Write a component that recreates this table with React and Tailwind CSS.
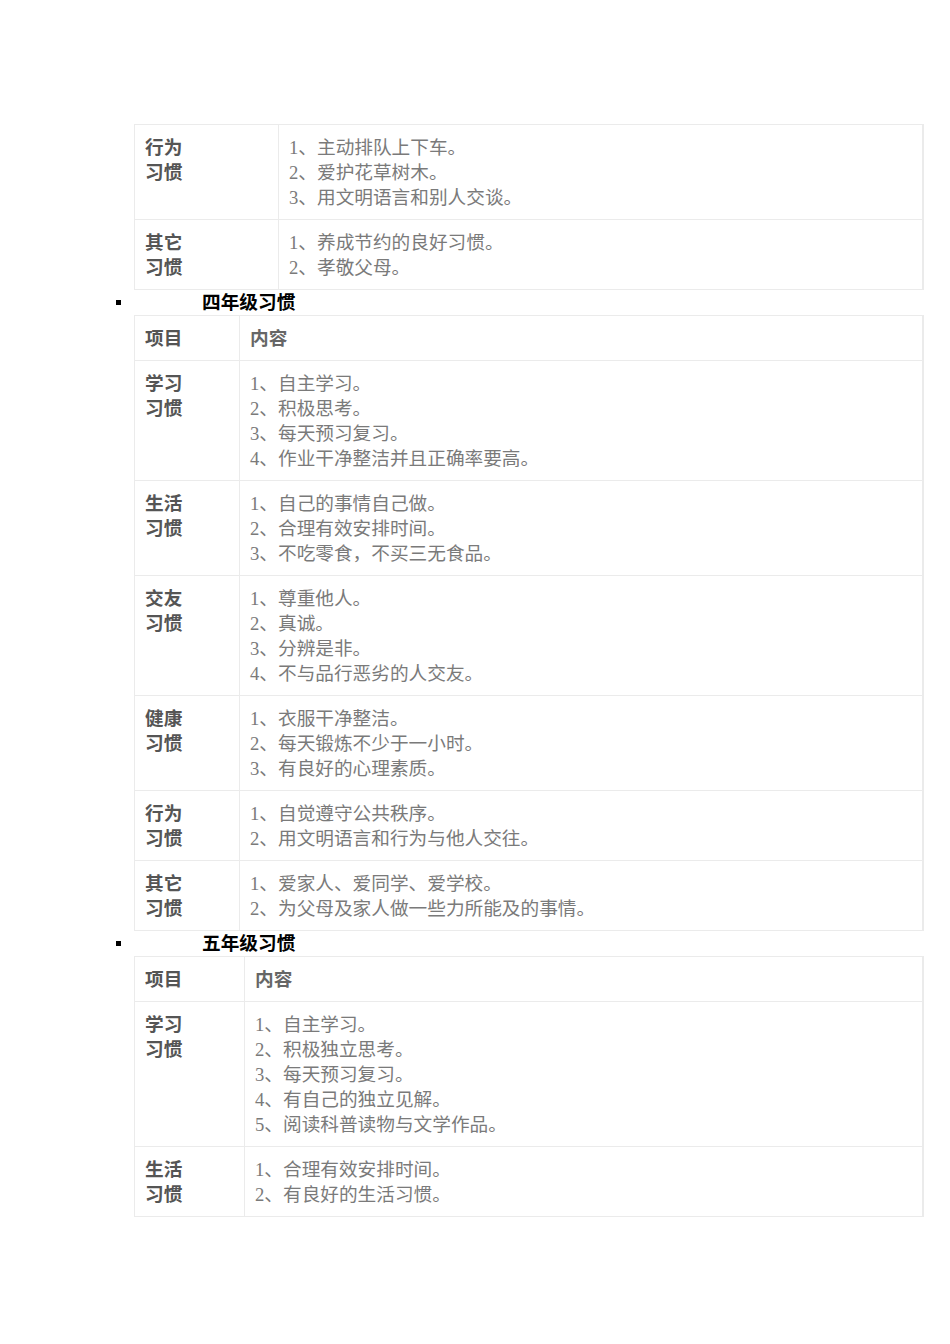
import React from "react";

const labelFont = { fontFamily: '"Liberation Sans","Noto Sans CJK SC",sans-serif' };
const bodyFont = { fontFamily: '"Liberation Serif","Noto Sans CJK SC",serif' };

function Table({ leftW, header, rows }) {
  return (
    <div className="ml-[134px] w-[790px] border border-[#ebebeb] border-r-2">
      {header && (
        <div className="flex">
          <div
            className={`${leftW} shrink-0 border-r border-[#ebebeb] px-[10px] pt-[10px] pb-[9px] text-[18.67px] leading-[25px] font-semibold text-[#555]`}
            style={labelFont}
          >
            项目
          </div>
          <div
            className="flex-1 px-[10px] pt-[10px] pb-[9px] text-[18.67px] leading-[25px] font-semibold text-[#666]"
            style={labelFont}
          >
            内容
          </div>
        </div>
      )}
      {rows.map((r, i) => (
        <div
          key={i}
          className={`flex ${header || i > 0 ? "border-t border-[#ebebeb]" : ""}`}
        >
          <div
            className={`${leftW} shrink-0 border-r border-[#ebebeb] px-[10px] pt-[10px] pb-[9px] text-[18.67px] leading-[25px] font-semibold text-[#555]`}
            style={labelFont}
          >
            <div>{r.label[0]}</div>
            <div>{r.label[1]}</div>
          </div>
          <div
            className="flex-1 px-[10px] pt-[10px] pb-[9px] text-[18.67px] leading-[25px] text-[#7a7a7a]"
            style={bodyFont}
          >
            {r.items.map((t, j) => (
              <div key={j}>
                {j + 1}、{t}
              </div>
            ))}
          </div>
        </div>
      ))}
    </div>
  );
}

function Heading({ text }) {
  return (
    <div className="flex h-[25px] items-center">
      <div className="ml-[116px] h-[5px] w-[5px] bg-black" />
      <div
        className="ml-[81px] text-[18.67px] font-bold leading-[25px] text-black"
        style={labelFont}
      >
        {text}
      </div>
    </div>
  );
}

export default function App() {
  return (
    <div className="h-[1344px] w-[950px] bg-white pt-[124px]">
      <Table
        leftW="w-[144px]"
        rows={[
          { label: ["行为", "习惯"], items: ["主动排队上下车。", "爱护花草树木。", "用文明语言和别人交谈。"] },
          { label: ["其它", "习惯"], items: ["养成节约的良好习惯。", "孝敬父母。"] },
        ]}
      />
      <Heading text="四年级习惯" />
      <Table
        leftW="w-[105px]"
        header
        rows={[
          { label: ["学习", "习惯"], items: ["自主学习。", "积极思考。", "每天预习复习。", "作业干净整洁并且正确率要高。"] },
          { label: ["生活", "习惯"], items: ["自己的事情自己做。", "合理有效安排时间。", "不吃零食，不买三无食品。"] },
          { label: ["交友", "习惯"], items: ["尊重他人。", "真诚。", "分辨是非。", "不与品行恶劣的人交友。"] },
          { label: ["健康", "习惯"], items: ["衣服干净整洁。", "每天锻炼不少于一小时。", "有良好的心理素质。"] },
          { label: ["行为", "习惯"], items: ["自觉遵守公共秩序。", "用文明语言和行为与他人交往。"] },
          { label: ["其它", "习惯"], items: ["爱家人、爱同学、爱学校。", "为父母及家人做一些力所能及的事情。"] },
        ]}
      />
      <Heading text="五年级习惯" />
      <Table
        leftW="w-[110px]"
        header
        rows={[
          { label: ["学习", "习惯"], items: ["自主学习。", "积极独立思考。", "每天预习复习。", "有自己的独立见解。", "阅读科普读物与文学作品。"] },
          { label: ["生活", "习惯"], items: ["合理有效安排时间。", "有良好的生活习惯。"] },
        ]}
      />
    </div>
  );
}
